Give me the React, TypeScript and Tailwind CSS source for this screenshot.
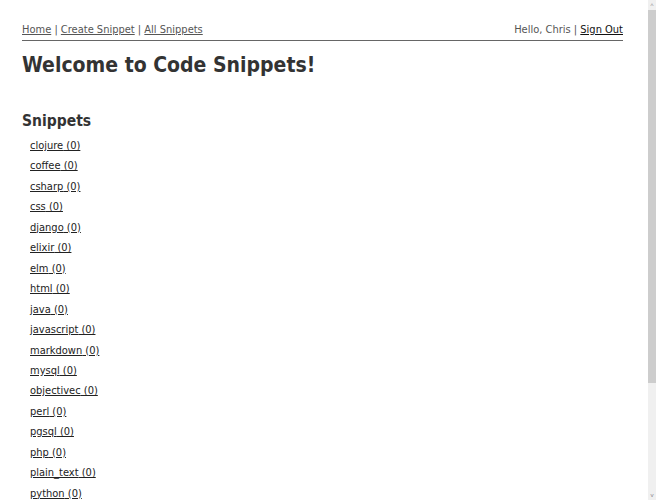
import React from "react";

const langs = [
  "clojure", "coffee", "csharp", "css", "django", "elixir", "elm", "html", "java",
  "javascript", "markdown", "mysql", "objectivec", "perl", "pgsql", "php", "plain_text",
  "python", "ruby", "rust", "scala", "sql", "swift", "typescript", "xml",
];

export default function App() {
  return (
    <div className="flex h-[500px] bg-white text-[#333]">
      <div className="min-w-0 flex-1 overflow-hidden" style={{ fontFamily: '"DejaVu Sans Condensed", "DejaVu Sans", Verdana, sans-serif' }}>
        <div className="pl-[22px] pr-[25px] pt-[23px] pb-[12px]">
          <div className="flex justify-between border-b border-[#666] pb-[3px] text-[11px] leading-[14px]">
            <div className="text-[#555]">
              <a href="#" className="underline text-[#555]">Home</a>
              <span> | </span>
              <a href="#" className="underline text-[#555]">Create Snippet</a>
              <span> | </span>
              <a href="#" className="underline text-[#555]">All Snippets</a>
            </div>
            <div className="text-[#555]">
              <span>Hello, Chris | </span>
              <a href="#" className="underline text-[#111]">Sign Out</a>
            </div>
          </div>
          <h1 className="mt-[10px] text-[21px] font-bold leading-[28px] text-[#333]">
            Welcome to Code Snippets!
          </h1>
          <h2 className="mt-[32px] text-[15.5px] font-bold leading-[20px] text-[#333]">Snippets</h2>
          <ul className="mt-[5px] pl-[8px] text-[11px]">
            {langs.map((l) => (
              <li key={l} className="leading-[20.45px]">
                <a href="#" className="underline text-[#222]">{l} (0)</a>
              </li>
            ))}
          </ul>
        </div>
      </div>
      <div className="flex w-[8px] flex-col bg-[#f0f0f0]">
        <div className="flex h-[10px] items-center justify-center text-[6px] leading-none text-[#888]">^</div>
        <div className="h-[373px] bg-[#cdcdcd]"></div>
        <div className="flex-1"></div>
        <div className="flex h-[10px] items-center justify-center text-[6px] leading-none text-[#888]">v</div>
      </div>
    </div>
  );
}
